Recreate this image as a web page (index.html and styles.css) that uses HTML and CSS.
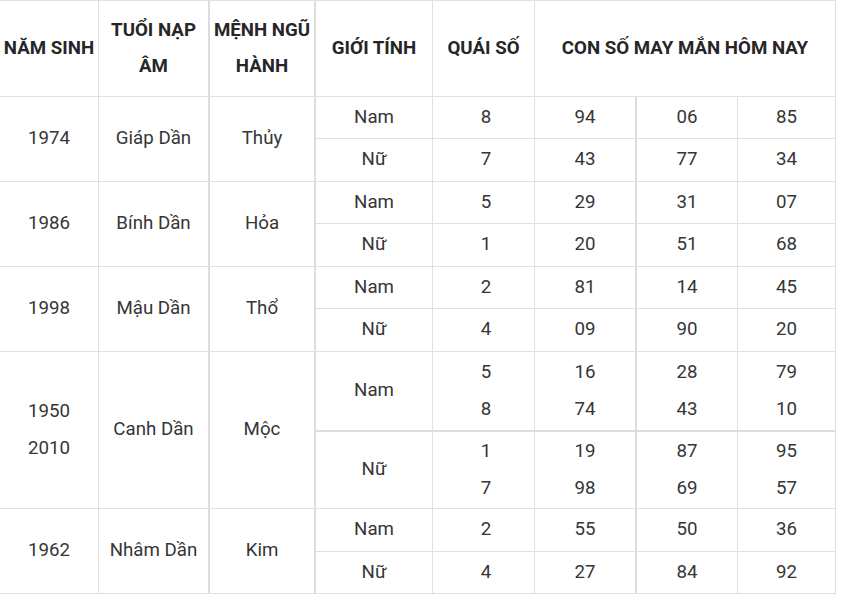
FILE: index.html
```html
<!DOCTYPE html>
<html lang="vi">
<head>
<meta charset="utf-8">
<title>Con số may mắn</title>
<link rel="stylesheet" href="styles.css">
</head>
<body>
<div class="tbl">
  <div class="c h">NĂM SINH</div>
  <div class="c h b2">TUỔI NẠP<br>ÂM</div>
  <div class="c h b2">MỆNH NGŨ<br>HÀNH</div>
  <div class="c h">GIỚI TÍNH</div>
  <div class="c h">QUÁI SỐ</div>
  <div class="c h s3">CON SỐ MAY MẮN HÔM NAY</div>

  <div class="c r2">1974</div>
  <div class="c r2 b2">Giáp Dần</div>
  <div class="c r2 b2">Thủy</div>
  <div class="c">Nam</div><div class="c q">8</div><div class="c b2">94</div><div class="c">06</div><div class="c">85</div>
  <div class="c">Nữ</div><div class="c q">7</div><div class="c b2">43</div><div class="c">77</div><div class="c">34</div>

  <div class="c r2">1986</div>
  <div class="c r2 b2">Bính Dần</div>
  <div class="c r2 b2">Hỏa</div>
  <div class="c">Nam</div><div class="c q">5</div><div class="c b2">29</div><div class="c">31</div><div class="c">07</div>
  <div class="c">Nữ</div><div class="c q">1</div><div class="c b2">20</div><div class="c">51</div><div class="c">68</div>

  <div class="c r2">1998</div>
  <div class="c r2 b2">Mậu Dần</div>
  <div class="c r2 b2">Thổ</div>
  <div class="c">Nam</div><div class="c q">2</div><div class="c b2">81</div><div class="c">14</div><div class="c">45</div>
  <div class="c">Nữ</div><div class="c q">4</div><div class="c b2">09</div><div class="c">90</div><div class="c">20</div>

  <div class="c r2">1950<br>2010</div>
  <div class="c r2 b2">Canh Dần</div>
  <div class="c r2 b2">Mộc</div>
  <div class="c bb">Nam</div><div class="c q bb">5<br>8</div><div class="c b2 bb">16<br>74</div><div class="c bb">28<br>43</div><div class="c bb">79<br>10</div>
  <div class="c">Nữ</div><div class="c q">1<br>7</div><div class="c b2">19<br>98</div><div class="c">87<br>69</div><div class="c">95<br>57</div>

  <div class="c r2">1962</div>
  <div class="c r2 b2">Nhâm Dần</div>
  <div class="c r2 b2">Kim</div>
  <div class="c">Nam</div><div class="c q">2</div><div class="c b2">55</div><div class="c">50</div><div class="c">36</div>
  <div class="c">Nữ</div><div class="c q">4</div><div class="c b2">27</div><div class="c">84</div><div class="c">92</div>
</div>
</body>
</html>
```

FILE: styles.css
```css
html, body {
  margin: 0;
  padding: 0;
  background: #ffffff;
}

.tbl {
  display: grid;
  grid-template-columns: 99px 111px 106px 117px 102px 102px 101px 98px;
  grid-template-rows: 96px 42px 43px 42px 43px 42px 43px 80px 77px 43px 42px;
  width: 836px;
  border-top: 1px solid #e2e2e2;
  font-family: Roboto, "Liberation Sans", sans-serif;
  font-size: 18.7px;
  color: #363636;
}

.c {
  box-sizing: border-box;
  display: flex;
  align-items: center;
  justify-content: center;
  text-align: center;
  line-height: 37px;
  padding-bottom: 1px;
  border-right: 1px solid #e0e0e0;
  border-bottom: 1px solid #e0e0e0;
}

.h {
  font-weight: 700;
  color: #262626;
  line-height: 36px;
}

.b2 {
  border-right-width: 2px;
  border-right-color: #dcdcdc;
}

.h.s3 {
  grid-column: span 3;
  border-right-width: 1px;
}

.r2 {
  grid-row: span 2;
}

.bb {
  border-bottom-width: 2px;
  border-bottom-color: #dcdcdc;
}

.q {
  padding-left: 5px;
}
```
